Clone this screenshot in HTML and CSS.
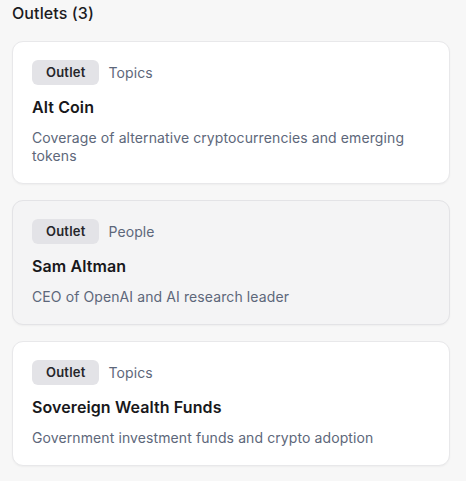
FILE: index.html
```html
<!DOCTYPE html>
<html lang="en">
<head>
    <meta charset="UTF-8">
    <meta name="viewport" content="width=device-width, initial-scale=1.0">
    <title>Outlets</title>
    <link rel="stylesheet" href="styles.css">
</head>
<body>
    <div class="outlets">
        <h2 class="outlets-title">Outlets (3)</h2>
        <div class="outlet-list">
            <div class="outlet-card">
                <div class="outlet-meta">
                    <span class="badge">Outlet</span>
                    <span class="category">Topics</span>
                </div>
                <h3 class="outlet-name">Alt Coin</h3>
                <p class="outlet-desc">Coverage of alternative cryptocurrencies and emerging tokens</p>
            </div>
            <div class="outlet-card hovered">
                <div class="outlet-meta">
                    <span class="badge">Outlet</span>
                    <span class="category">People</span>
                </div>
                <h3 class="outlet-name">Sam Altman</h3>
                <p class="outlet-desc">CEO of OpenAI and AI research leader</p>
            </div>
            <div class="outlet-card">
                <div class="outlet-meta">
                    <span class="badge">Outlet</span>
                    <span class="category">Topics</span>
                </div>
                <h3 class="outlet-name">Sovereign Wealth Funds</h3>
                <p class="outlet-desc">Government investment funds and crypto adoption</p>
            </div>
        </div>
    </div>
</body>
</html>
```

FILE: styles.css
```css
body {
    margin: 0;
    font-family: Inter, "Noto Sans", sans-serif;
    background-color: #f7f7f7;
    color: #18181b;
}

.outlets {
    padding: 1px 16px 15px 12px;
}

.outlets-title {
    margin: 0 0 16px;
    font-size: 16px;
    line-height: 24px;
    font-weight: 500;
    letter-spacing: 0.1px;
    color: #1c1c1f;
}

.outlet-list {
    display: flex;
    flex-direction: column;
    gap: 16px;
}

.outlet-card {
    display: flex;
    flex-direction: column;
    gap: 10px;
    padding: 18px 19px;
    background-color: #ffffff;
    border: 1px solid #e8e8ea;
    border-radius: 11px;
    box-shadow: 0 1px 2px rgba(0, 0, 0, 0.04);
}

.outlet-card.hovered {
    background-color: #f4f4f5;
    border-color: #e3e3e6;
}

.outlet-meta {
    display: flex;
    align-items: center;
    gap: 9px;
}

.badge {
    height: 25px;
    line-height: 25px;
    padding: 0 14px;
    border-radius: 6px;
    background-color: #e3e3e7;
    color: #26262a;
    font-size: 13px;
    font-weight: 600;
    letter-spacing: 0.2px;
}

.category {
    font-size: 14px;
    letter-spacing: 0.1px;
    color: #5d677a;
}

.outlet-name {
    margin: 0;
    font-size: 16px;
    line-height: 24px;
    font-weight: 600;
    letter-spacing: 0.1px;
    color: #18181b;
}

.outlet-desc {
    margin: 0;
    font-size: 14px;
    line-height: 18px;
    letter-spacing: 0.1px;
    color: #5d677a;
}
```
